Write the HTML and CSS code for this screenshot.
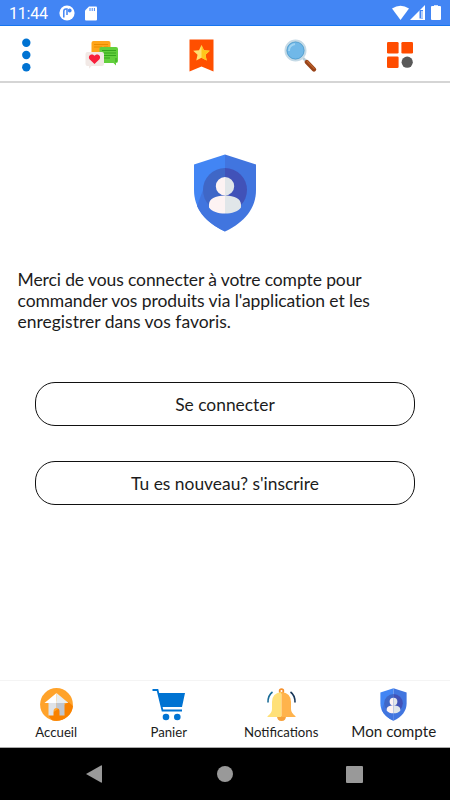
FILE: index.html
```html
<!DOCTYPE html>
<html lang="fr">
<head>
<meta charset="utf-8">
<title>Mon compte</title>
<link rel="stylesheet" href="styles.css">
</head>
<body>
<svg class="defs" aria-hidden="true">
  <symbol id="shield" viewBox="0 0 64 78">
    <path fill="#4285f4" d="M32 .5 1 10.500V36C1 54 12 68 32 77.500z"/>
    <path fill="#4175df" d="M32 .5 63 10.500V36C63 54 52 68 32 77.500z"/>
    <path fill="#4175df" d="M10 36 4 52Q11 68 32 77.500V45z"/>
    <path fill="#3f67c7" d="M32 14a22 22 0 0 0 0 44z"/>
    <path fill="#4152b8" d="M32 14a22 22 0 0 1 0 44z"/>
    <path fill="#fdf3f3" d="M32 23a9.200 9.200 0 0 0 0 18.400C22 41.400 16 45 16 50.500v3C19 57.500 25 59.500 32 59.500z"/>
    <path fill="#e1e6e9" d="M32 23a9.200 9.200 0 0 1 0 18.400C42 41.400 48 45 48 50.500v3C45 57.500 39 59.500 32 59.500z"/>
  </symbol>
</svg>
<div class="phone">
  <div class="status">
    <span class="clock">11:44</span>
    <svg class="status-app" viewBox="0 0 16 16"><circle cx="8" cy="8" r="7.600" fill="#fff"/><path d="M4.800 12.500V6.200Q4.800 4 7 4h1v6" fill="none" stroke="#4285f4" stroke-width="1.500"/><circle cx="10.700" cy="5.500" r="1.900" fill="#4285f4"/></svg>
    <svg class="status-sd" viewBox="0 0 12 15"><path fill="#fff" d="M4 .5h7q1 0 1 1v12q0 1-1 1H1q-1 0-1-1v-9z"/><path stroke="#4285f4" d="M5 2v3M7.200 2v3M9.400 2v3"/></svg>
    <svg class="status-right" viewBox="0 0 52 16"><path fill="#fff" d="M1 3.500Q9.500-2 18 3.500L9.500 15z"/><path fill="#fff" d="M34 0v15H19z"/><path fill="#4285f4" d="M28.500 5h3.500v8.500h-3.500z"/><path stroke="#fff" stroke-width="1.200" d="M31 6v7"/><path fill="#fff" d="M43 1V.2h4V1h2q1 0 1 1v12q0 1-1 1h-8q-1 0-1-1V2q0-1 1-1z"/></svg>
  </div>
  <header class="toolbar">
    <svg class="dots" viewBox="0 0 9 34"><g fill="#0073d2"><circle cx="4.300" cy="4.700" r="4.200"/><circle cx="4.300" cy="17" r="4.200"/><circle cx="4.300" cy="29.300" r="4.200"/></g></svg>
    <svg class="chat" viewBox="0 0 34 30">
      <path fill="#ffa51b" d="M8.500 1h15q2 0 2 2v10h-19V3q0-2 2-2z"/><path stroke="#e98c00" d="M9 4.500h14M9 7h8M19 7h4"/>
      <path fill="#62cf3c" d="M16 7h15q2 0 2 2v12q0 2-2 2v2.500L28.500 23H14.500V8.500Q14.500 7 16 7z"/><path stroke="#34a51c" d="M17 10.500h14M17 13h14M17 15.500h14M17 18h8M31 18v4"/>
      <path fill="#f2e9e6" d="M2.500 12H17q2 0 2 2v10q0 2-2 2H6.500L4 28.700V26H2.500q-2 0-2-2V14q0-2 2-2z"/>
      <path fill="#f81f3c" d="M9.500 24 4.800 19.500C2 16 6.500 12.400 9.500 15.700c3-3.300 7.500.3 4.700 3.800z"/>
    </svg>
    <svg class="bookmark" viewBox="0 0 25 33"><path fill="#ff4f00" d="M.5.500h24V32.500L12.500 27.500.5 32.500z"/><path fill="#ffe070" d="m12.500 6 2.500 5.200 5.800.6-4.300 4 1.200 5.700-5.200-2.700-5.200 2.700 1.200-5.700-4.300-4 5.800-.6z"/><path fill="#ffc61b" d="m12.500 6 2.500 5.200 5.800.6-4.300 4 1.200 5.700-5.200-2.700z"/></svg>
    <svg class="search" viewBox="0 0 34 34"><path stroke="#b9cdd8" stroke-width="2.500" d="m19 19 4 4"/><path stroke="#984319" stroke-width="4.400" stroke-linecap="round" d="m22.800 23 7.200 7.500"/><path stroke="#bd622c" stroke-width="1.200" d="m23 22 7.500 7.800"/><circle cx="11.500" cy="11.500" r="9.900" fill="#70b8e8" stroke="#c5dae6" stroke-width="2.200"/><circle cx="11.500" cy="11.500" r="8.600" fill="none" stroke="#4695c6" stroke-width=".7"/><path d="M5 12Q5 6 11 5" fill="none" stroke="#9ed3f2" stroke-width="1.800"/></svg>
    <svg class="apps" viewBox="0 0 26 26"><g fill="#ff4c00"><rect width="11.600" height="11.600" rx="1.300"/><rect x="14.400" width="11.600" height="11.600" rx="1.300"/><rect y="14.400" width="11.600" height="11.600" rx="1.300"/></g><circle cx="20.200" cy="20.200" r="5.600" fill="#595959"/></svg>
  </header>
  <main class="content">
    <svg class="hero"><use href="#shield"/></svg>
    <p class="message"><span class="tight">Merci de vous connecter à votre compte pour</span><br><span class="snug">commander vos produits via l'application et les</span><br>enregistrer dans vos favoris.</p>
    <div class="actions">
      <button class="action">Se connecter</button>
      <button class="action">Tu es nouveau? s'inscrire</button>
    </div>
  </main>
  <nav class="tabs">
    <a class="tab">
      <svg class="tab-icon" viewBox="0 0 33 33"><circle cx="16.500" cy="16.500" r="16.400" fill="#ffa32b"/><path fill="#f98200" d="M28.500 14 33 18C32 28 22 35 12 32.200L8.500 27.500z"/><path fill="#dfe3e8" d="M8.500 13.500h8V20q-3 0-3 3.500v4h-5z"/><path fill="#bfc5cf" d="M16.500 13.500h8v14h-5v-4q0-3.500-3-3.500z"/><path fill="#fff" d="M16.500 5v10H4.500z"/><path fill="#e8edf0" d="M16.500 5v10h12z"/></svg>
      <span>Accueil</span>
    </a>
    <a class="tab">
      <svg class="tab-icon" viewBox="0 0 33 33"><path fill="none" stroke="#0073d2" stroke-width="1.800" d="M.5 2h5l5 20.500h19.500"/><path fill="#0073d2" d="M6 5h27l-3 14H9.500z"/><g fill="#0073d2"><circle cx="14" cy="29" r="3.300"/><circle cx="25.300" cy="29" r="3.300"/></g></svg>
      <span>Panier</span>
    </a>
    <a class="tab">
      <svg class="tab-icon" viewBox="0 0 33 33"><circle cx="16.500" cy="3" r="1.900" fill="none" stroke="#f5912d" stroke-width="1.700"/><path fill="#f6a13b" d="M12 28h9q0 5-4.500 5T12 28z"/><path fill="#ffe078" d="M16.500 4Q7 5 7 14v7q0 4-4.500 7.200v.8h14z"/><path fill="#ffb34c" d="M16.500 4Q26 5 26 14v7q0 4 4.500 7.200v.8h-14z"/><path fill="none" stroke="#196b96" stroke-width="1.600" d="M7.500 4Q2.800 7.500 3 14.500"/><path fill="none" stroke="#173557" stroke-width="1.600" d="M25.500 4q4.700 3.500 4.500 10.500"/></svg>
      <span>Notifications</span>
    </a>
    <a class="tab active">
      <svg class="tab-icon"><use href="#shield"/></svg>
      <span>Mon compte</span>
    </a>
  </nav>
  <div class="system">
    <svg viewBox="0 0 16 18"><path d="M0 9 15 .5Q16 0 16 1v16q0 1-1 .5z"/></svg>
    <svg viewBox="0 0 16 16"><circle cx="8" cy="8" r="8"/></svg>
    <svg viewBox="0 0 17 17"><rect width="17" height="17" rx="1"/></svg>
  </div>
</div>
</body>
</html>
```
FILE: styles.css
```css
* { box-sizing: border-box; }
body { margin: 0; background: #fff; color: #1c1c1c; font-family: Lato, sans-serif; }
svg { display: block; flex: none; }
.defs { width: 0; height: 0; position: absolute; }
.phone { width: 450px; height: 800px; display: flex; flex-direction: column; overflow: hidden; }
.status { height: 26px; flex: none; display: flex; align-items: center; padding: 1px 7px 0 9px; background: #4285f4; border-bottom: 1px solid #1675ef; color: #fff; }
.clock { width: 50px; font: 16px/24px Roboto, sans-serif; padding-top: 1px; letter-spacing: -.2px; }
.status-app { width: 16px; height: 16px; }
.status-sd { width: 12px; height: 15px; margin-left: 10px; }
.status-right { width: 52px; height: 16px; margin-left: auto; }
.toolbar { height: 57px; flex: none; display: flex; align-items: flex-start; padding-top: 12px; border-bottom: 2px solid #d5d5d5; }
.dots { width: 9px; height: 34px; margin-left: 22px; }
.chat { width: 34px; height: 30px; margin: 2px 0 0 54px; }
.bookmark { width: 25px; height: 33px; margin: 1px 0 0 70px; }
.search { width: 34px; height: 34px; margin: 1px 0 0 70px; }
.apps { width: 26px; height: 26px; margin: 4px 0 0 69px; }
.content { flex: 1; display: flex; flex-direction: column; padding: 71px 17px 0; }
.hero { width: 64px; height: 78px; align-self: center; }
.message { margin: 37px 0 0 .5px; font-size: 17.5px; line-height: 21px; white-space: nowrap; font-variant-ligatures: none; }
.tight { letter-spacing: -.1px; }
.snug { letter-spacing: -.07px; }
.actions { display: flex; flex-direction: column; gap: 35px; margin: 50px 18px 0; }
.action { height: 44px; padding: 1px 0 0; border: 1px solid #111; border-radius: 20px; background: #fff; color: #1c1c1c; font: 17.4px/21px Lato, sans-serif; }
.tabs { height: 68px; flex: none; display: grid; grid-template-columns: repeat(4, 1fr); border-top: 1px solid #f4f4f4; border-bottom: 1px solid #aaa; }
.tab { display: flex; flex-direction: column; align-items: center; padding-top: 7px; font-size: 13.2px; line-height: 19px; white-space: nowrap; }
.tab-icon { width: 33px; height: 33px; margin-bottom: 2px; }
.active { font-size: 15.2px; line-height: 17px; }
.system { height: 52px; flex: none; display: flex; align-items: center; padding-left: 86px; gap: 115px; background: #000; fill: #999; }
.system svg { width: 16px; height: 18px; }
.system svg:last-child { width: 17px; height: 17px; margin-left: -2px; }
```
